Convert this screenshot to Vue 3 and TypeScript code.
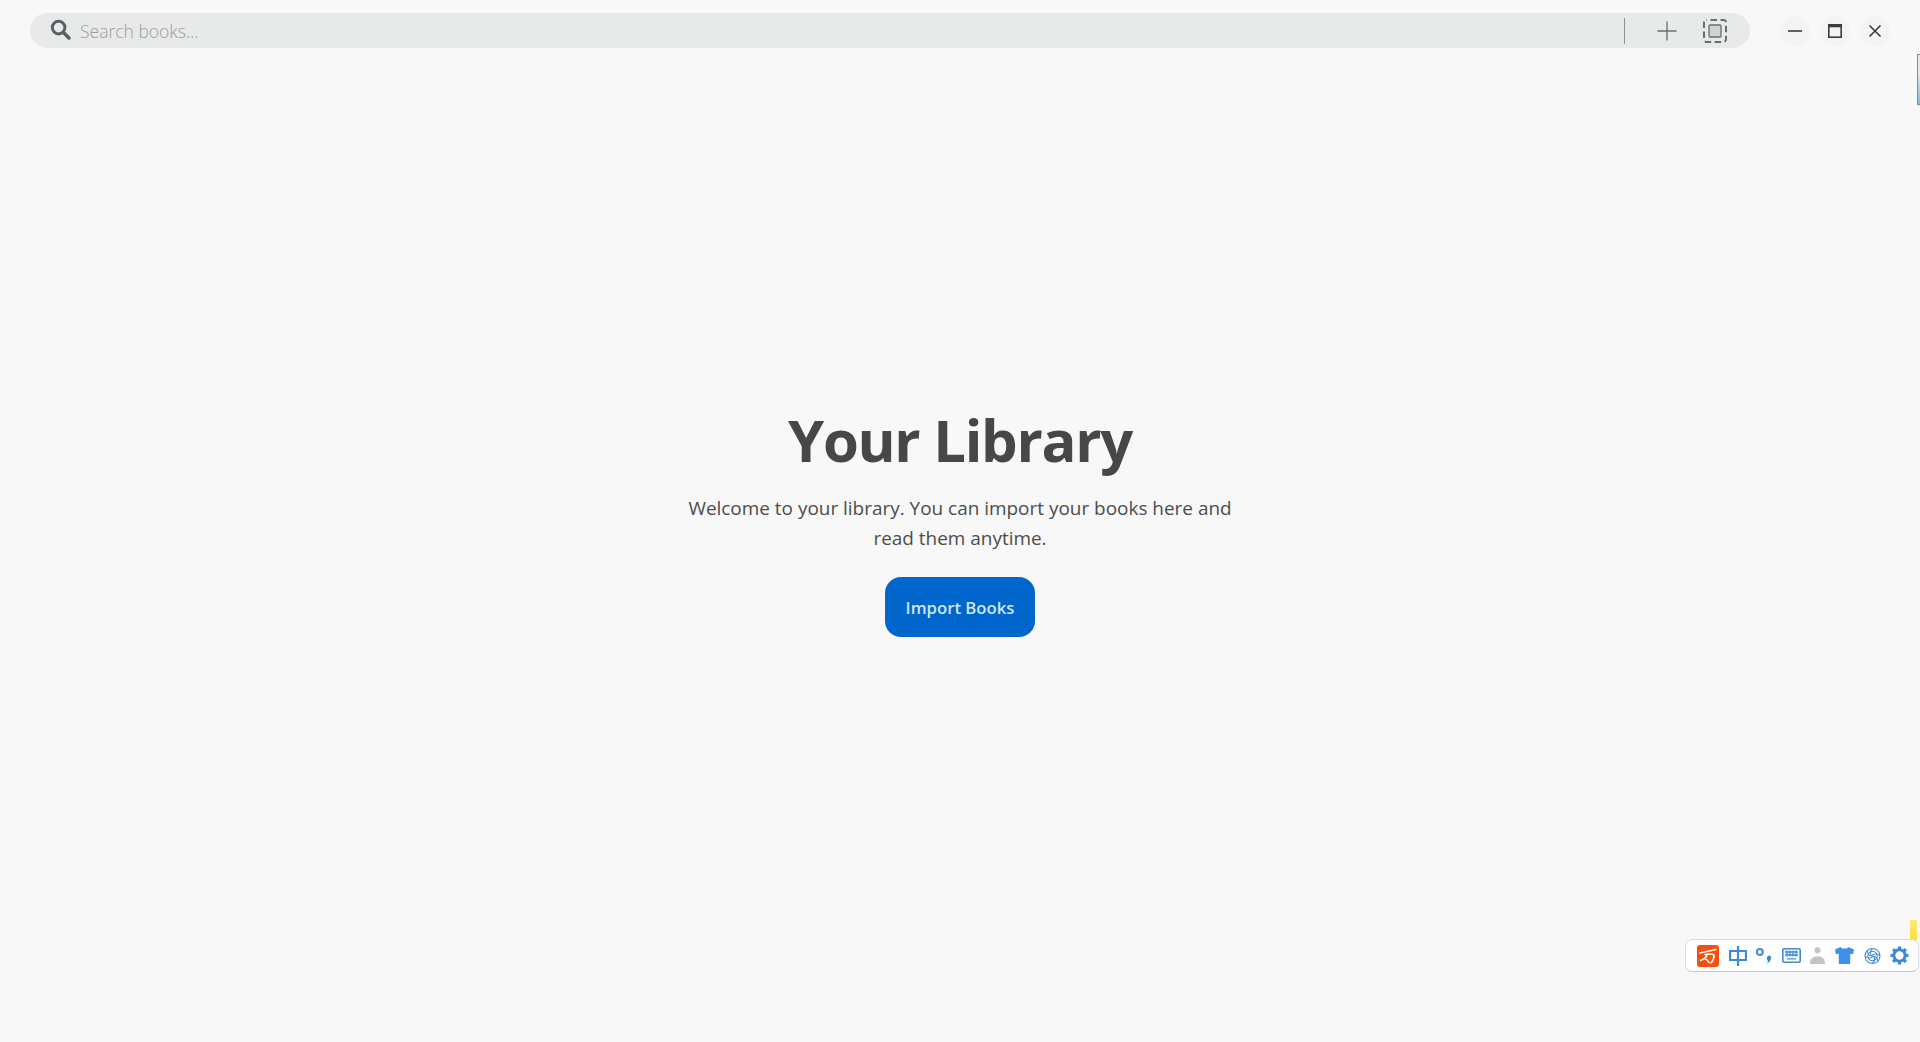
<script setup lang="ts">
const title = 'Your Library';
const intro = 'Welcome to your library. You can import your books here and read them anytime.';
</script>

<template>
  <div class="page">
    <header class="topbar">
      <div class="search">
        <svg class="search-icon" viewBox="0 0 20 20" width="21" height="21">
          <circle cx="8.200" cy="8.200" r="6" fill="none" stroke="#5d5f68" stroke-width="2.800" />
          <path d="M12.600 12.600 18 18" stroke="#5d5f68" stroke-width="3.400" stroke-linecap="round" />
        </svg>
        <span class="placeholder">Search books...</span>
        <span class="spacer" />
        <span class="divider" />
        <svg class="tool plus" viewBox="0 0 20 20" width="20" height="20">
          <path d="M10 0.500v19M0.500 10h19" stroke="#6b6d70" stroke-width="1.300" />
        </svg>
        <svg class="tool shot" viewBox="0 0 24 24" width="24" height="24">
          <rect x="1" y="1" width="22" height="22" rx="2.500" fill="none" stroke="#6b6d70" stroke-width="2" stroke-dasharray="6.500 3.500" stroke-dashoffset="-4" />
          <rect x="6" y="6" width="12" height="12" rx="1" fill="#cfd3d6" stroke="#6b6d70" stroke-width="1.300" />
        </svg>
      </div>
      <div class="win-buttons">
        <button class="win-btn">
          <svg viewBox="0 0 14 14" width="14" height="14"><path d="M0 7h14" stroke="#3c3c3c" stroke-width="1.600" /></svg>
        </button>
        <button class="win-btn">
          <svg viewBox="0 0 14 14" width="14" height="14">
            <rect x="0.800" y="0.800" width="12.400" height="12.400" fill="none" stroke="#3c3c3c" stroke-width="1.600" />
            <path d="M0 2h14" stroke="#3c3c3c" stroke-width="2.600" />
          </svg>
        </button>
        <button class="win-btn">
          <svg viewBox="0 0 14 14" width="14" height="14"><path d="M1.500 1.500l11 11M12.500 1.500l-11 11" stroke="#3c3c3c" stroke-width="1.600" /></svg>
        </button>
      </div>
    </header>

    <main class="welcome">
      <h1>{{ title }}</h1>
      <p>{{ intro }}</p>
      <button class="import">Import Books</button>
    </main>

    <div class="side-tab" />
    <div class="yellow-tab" />

    <div class="ime">
      <svg viewBox="0 0 22 22" width="22" height="22">
        <rect width="22" height="22" rx="3" fill="#f4500f" />
        <path d="M3 8 19 4.500M8 9.500c5-1 8-.5 9 .5 0 4-1 6-3 8M3.500 15.500c3-1 6-3 7-6.500M7 13.500c2 .5 4 2 5 4" fill="none" stroke="#fff" stroke-width="1.500" stroke-linecap="round" />
      </svg>
      <svg viewBox="0 0 18 20" width="18" height="20">
        <path d="M9 0v20M1 5h16v9H1z" fill="none" stroke="#4189d2" stroke-width="2.200" />
      </svg>
      <svg viewBox="0 0 16 16" width="16" height="16">
        <circle cx="3.800" cy="4" r="3" fill="none" stroke="#4189d2" stroke-width="2" />
        <path d="M13 7.500c3 0 3.600 4.500-2 8.500 1.200-2.200 1-3.200.2-4.300-.9-1.700.2-4.200 1.800-4.200z" fill="#4189d2" />
      </svg>
      <svg viewBox="0 0 19 15" width="19" height="15">
        <rect x="0.800" y="0.800" width="17.400" height="13.400" rx="1.500" fill="none" stroke="#4189d2" stroke-width="1.600" />
        <path d="M3 4h13M3 7h13M5 10.800h9M5 2.500v6M8 2.500v6M11 2.500v6M14 2.500v6" stroke="#4189d2" stroke-width="1.300" />
      </svg>
      <svg viewBox="0 0 15 17" width="15" height="17">
        <circle cx="7.500" cy="3.200" r="3" fill="#c4c4c4" />
        <path d="M0 17c0-5 2.500-7.800 7.500-7.800S15 12 15 17z" fill="#c4c4c4" />
      </svg>
      <svg viewBox="0 0 19 17" width="19" height="17">
        <path d="M5.500 0 0 2.500 .8 7l3-.3V17h11.400V6.700l3 .3L19 2.500 13.500 0c-.8 2-7.200 2-8 0z" fill="#3c91ea" />
      </svg>
      <svg viewBox="0 0 20 20" width="17" height="18" fill="none" stroke="#4189d2" stroke-width="1.200">
        <circle cx="10" cy="10" r="8.800" />
        <circle cx="10" cy="10" r="5.500" />
        <path d="M10 1.200c-3 3-3 6-1 9M18.800 10c-3-3-6-3-9-1M10 18.800c3-3 3-6 1-9M1.200 10c3 3 6 3 9 1M3.800 3.800c.5 4 2.500 6 6.200 6.200M16.200 16.200c-.5-4-2.500-6-6.200-6.200" />
      </svg>
      <svg viewBox="0 0 20 20" width="19" height="19">
        <circle cx="10" cy="10" r="6" fill="none" stroke="#4189d2" stroke-width="3.200" />
        <path d="M10 .5v4M10 15.500v4M.5 10h4M15.500 10h4M3.300 3.300l2.900 2.900M13.800 13.800l2.900 2.900M16.700 3.300l-2.900 2.900M6.200 13.800l-2.900 2.900" stroke="#4189d2" stroke-width="3.400" />
      </svg>
    </div>
  </div>
</template>

<style scoped>
.page {
  position: relative;
  height: 1042px;
  box-sizing: border-box;
  background: #f8f8f9;
  display: flex;
  flex-direction: column;
  overflow: hidden;
  font-family: "Open Sans", "Noto Sans", sans-serif;
}

.topbar {
  display: flex;
  align-items: center;
  padding: 13px 30px 0 30px;
}

.search {
  flex: 1;
  height: 35px;
  background: #e8e9e9;
  border-radius: 18px;
  display: flex;
  align-items: center;
  padding: 0 23px 0 20px;
}

.search-icon {
  margin-bottom: 2px;
}

.placeholder {
  margin-left: 9px;
  font-size: 17.500px;
  font-weight: 300;
  color: #9b9ca3;
}

.spacer {
  flex: 1;
}

.divider {
  width: 1px;
  height: 26px;
  background: #8f9193;
  margin-right: 32px;
}

.plus {
  margin-right: 26px;
}

.win-buttons {
  display: flex;
  gap: 10px;
  margin-left: 30px;
}

.win-btn {
  width: 30px;
  height: 30px;
  padding: 0;
  border: none;
  border-radius: 50%;
  background: #f4f4f4;
  display: flex;
  align-items: center;
  justify-content: center;
}

.welcome {
  display: flex;
  flex-direction: column;
  align-items: center;
  padding-top: 352px;
  color: #4a4a4a;
}

h1 {
  margin: 0;
  font-size: 58px;
  line-height: 80px;
  font-weight: 700;
  letter-spacing: -1.300px;
  color: #474747;
}

p {
  width: 560px;
  margin: 13px 0 0;
  font-size: 18.950px;
  line-height: 30px;
  text-align: center;
  color: #4c4c4c;
}

.import {
  margin-top: 24px;
  width: 150px;
  height: 60px;
  border: none;
  border-radius: 16px;
  background: #0066cc;
  color: #cfe6fb;
  font-family: inherit;
  font-size: 16.700px;
  font-weight: 600;
}

.side-tab {
  position: absolute;
  right: 0;
  top: 54px;
  width: 2px;
  height: 49px;
  background: linear-gradient(#e4e7ee 40%, #8ab2ea);
  border: 1px solid #7d8fa8;
  border-right: none;
}

.yellow-tab {
  position: absolute;
  right: 3px;
  top: 920px;
  width: 7px;
  height: 20px;
  background: linear-gradient(#ffe873, #ffdc3f);
}

.ime {
  position: absolute;
  right: 1px;
  top: 939px;
  width: 234px;
  height: 33px;
  box-sizing: border-box;
  padding: 0 0 0 11px;
  display: flex;
  align-items: center;
  gap: 9.600px;
  background: #fff;
  border: 1px solid #d8dbdf;
  border-bottom-color: #c3c8cf;
  border-radius: 7px;
}
</style>

<style>
body {
  background: #f8f8f9;
}
</style>
